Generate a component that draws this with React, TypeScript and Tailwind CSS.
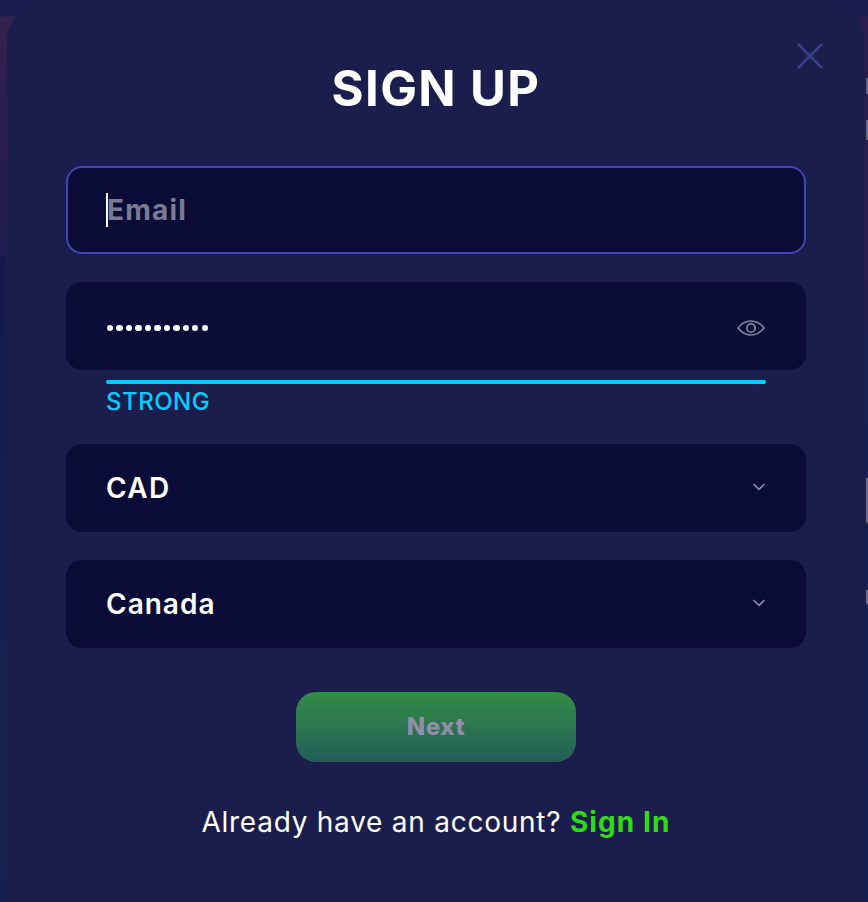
import React from "react";

const font = "font-['Inter','Liberation_Sans',sans-serif]";

function Chevron() {
  return (
    <svg width="12" height="8" viewBox="0 0 12 8" fill="none" className="mr-[1px] -translate-y-[1px]">
      <path d="M1 1.500 6 6.300 11 1.500" stroke="#8b8aa6" strokeWidth="1.700" strokeLinecap="round" strokeLinejoin="round" />
    </svg>
  );
}

function Eye() {
  return (
    <svg width="28" height="16" viewBox="0 0 28 16" fill="none">
      <path d="M1 8c3.600-4.700 8-7 13-7s9.400 2.300 13 7c-3.600 4.700-8 7-13 7S4.600 12.700 1 8Z" stroke="#86859f" strokeWidth="1.700" strokeLinejoin="round" />
      <circle cx="14" cy="8" r="4.200" stroke="#86859f" strokeWidth="1.700" />
    </svg>
  );
}

function Select({ label, tracking }: { label: string; tracking: string }) {
  return (
    <div className="flex h-[88px] items-center justify-between rounded-[16px] bg-[#0a0c37] px-[40px]">
      <span className={`text-[28px] font-semibold text-white ${tracking}`}>{label}</span>
      <Chevron />
    </div>
  );
}

export default function App() {
  return (
    <div
      className={`relative h-[902px] w-[868px] overflow-hidden bg-[image:linear-gradient(180deg,#1a1b4e_0,#1a1b4e_16px,#35224f_17px,#2b1c50_100px,#211c4f_255px,#15184a_256px,#13204f_620px,#14254f_680px,#14254f_840px,#14204f_902px),linear-gradient(180deg,#1a1b4e_0,#1a1b4e_16px,#2b1c50_17px,#281c4f_300px,#172052_340px,#161e50_902px)] bg-[size:434px_100%] bg-[position:0_0,100%_0] bg-no-repeat ${font}`}
    >
      <span className="absolute top-[78px] right-0 h-[16px] w-[2px] bg-[#5f5f80]" />
      <span className="absolute top-[120px] right-0 h-[20px] w-[2px] bg-[#6a6a88]" />
      <span className="absolute top-[478px] right-0 h-[45px] w-[2px] bg-[#6a6a88]" />
      <span className="absolute top-[590px] right-0 h-[14px] w-[2px] bg-[#6a6a88]" />

      <div className="relative ml-[7px] flex h-[902px] w-[858px] flex-col rounded-t-[42px] bg-[#1b1d4c] px-[59px]">
        <div className="relative flex h-[166px] justify-center">
          <h1 className="mt-[61px] text-[49px] leading-[56px] font-bold tracking-[1.400px] text-white">SIGN UP</h1>
          <svg width="26" height="26" viewBox="0 0 26 26" fill="none" className="absolute top-[43px] right-[-17px]">
            <path d="M1.500 1.500 24.500 24.500M24.500 1.500 1.500 24.500" stroke="#383f86" strokeWidth="2.500" strokeLinecap="round" />
          </svg>
        </div>

        <div className="flex h-[88px] items-center rounded-[16px] border-2 border-[#3f46b0] bg-[#0a0c37] pl-[38px]">
          <span className="h-[34px] w-[2px] bg-white" />
          <span className="-ml-[1px] text-[28px] leading-[34px] font-bold tracking-[1.200px] text-[#7b7a94]">Email</span>
        </div>

        <div className="mt-[28px] flex h-[88px] items-center justify-between rounded-[16px] bg-[#0a0c37] px-[41px] pt-[4px]">
          <div className="flex gap-[3.070px]">
            {Array.from({ length: 11 }).map((_, i) => (
              <span key={i} className="size-[6.400px] rounded-full bg-white" />
            ))}
          </div>
          <Eye />
        </div>

        <div className="mt-[10px] ml-[40px] h-[4px] w-[660px] rounded-full bg-[#00cfff]" />
        <div className="mt-[5px] ml-[40px] h-[25px] text-[24px] leading-[26px] font-medium tracking-[0.5px] text-[#00cfff]">STRONG</div>

        <div className="mt-[30px] flex flex-col gap-[28px]">
          <Select label="CAD" tracking="tracking-[1.400px]" />
          <Select label="Canada" tracking="tracking-[1px]" />
        </div>

        <button className="mx-auto mt-[44px] flex h-[70px] w-[280px] items-center justify-center rounded-[20px] bg-[linear-gradient(180deg,#338c45,#235e58)] text-[24px] font-extrabold tracking-[0.600px] text-[#8f8fa9]">
          Next
        </button>

        <p className="mt-[42px] text-center text-[28px] leading-[36px] tracking-[0.750px] text-white">
          Already have an account? <span className="font-bold tracking-[1.100px] text-[#2fdc14]">Sign In</span>
        </p>
      </div>
    </div>
  );
}
